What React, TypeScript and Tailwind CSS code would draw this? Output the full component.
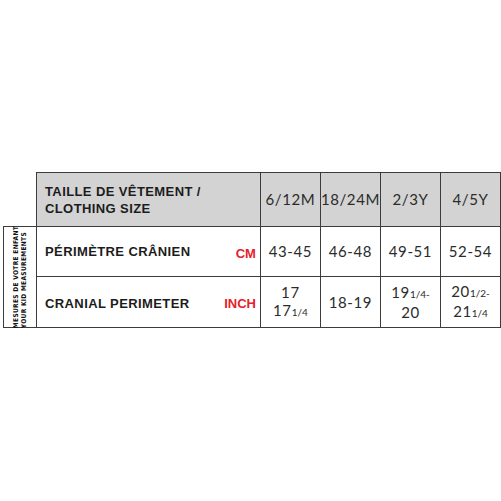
const sizes = ["6/12M", "18/24M", "2/3Y", "4/5Y"];
const cm = ["43-45", "46-48", "49-51", "52-54"];

const bold = "font-['Liberation_Sans',Arial,sans-serif] font-bold text-[13px] tracking-[0.4px] text-[#1c1c1c]";
const light = "font-['Lato','Open_Sans',sans-serif] font-normal text-[15px] tracking-[0.6px] text-[#2b2b2b] text-center";
const red = "font-['Liberation_Sans',Arial,sans-serif] text-[13px] font-bold text-[#e4222b]";

function Frac({ n }: { n: string }) {
  return <span className="text-[10px] tracking-normal">{n}</span>;
}

export default function App() {
  return (
    <div className="h-[501px] w-[501px] bg-white pl-[3px] pt-[172px]">
      <table className="table-fixed border-collapse">
        <colgroup>
          <col className="w-[33px]" />
          <col className="w-[224px]" />
          <col className="w-[60px]" />
          <col className="w-[59px]" />
          <col className="w-[60px]" />
          <col className="w-[60px]" />
        </colgroup>
        <tbody>
          <tr className="h-[54px]">
            <td />
            <td className="border border-[#3c3c3c] bg-[#d3d3d3] px-2 text-left align-middle">
              <div className={`${bold} leading-[17px]`}>
                TAILLE DE VÊTEMENT /<br />
                CLOTHING SIZE
              </div>
            </td>
            {sizes.map((s) => (
              <td key={s} className={`border border-[#3c3c3c] bg-[#d3d3d3] px-0 ${light}`}>
                {s}
              </td>
            ))}
          </tr>
          <tr className="h-[50px]">
            <td rowSpan={2} className="border border-[#3c3c3c] p-0 align-middle">
              <div className="flex h-[99px] items-center justify-center">
                <div className="rotate-180 whitespace-nowrap font-['DejaVu_Sans',sans-serif] text-[6.6px] font-bold font-stretch-condensed leading-[8px] tracking-[0.3px] text-[#111] [writing-mode:vertical-rl]">
                  MESURES DE VOTRE ENFANT
                  <br />
                  YOUR KID MEASUREMENTS
                </div>
              </div>
            </td>
            <td className="border border-[#3c3c3c] pl-2 pr-[4px]">
              <div className="flex items-center justify-between">
                <span className={bold}>PÉRIMÈTRE CRÂNIEN</span>
                <span className={`pt-[4px] ${red}`}>CM</span>
              </div>
            </td>
            {cm.map((v) => (
              <td key={v} className={`border border-[#3c3c3c] ${light}`}>
                {v}
              </td>
            ))}
          </tr>
          <tr className="h-[51px]">
            <td className="border border-[#3c3c3c] pl-2 pr-[4px] pt-[3px]">
              <div className="flex items-center justify-between">
                <span className={bold}>CRANIAL PERIMETER</span>
                <span className={red}>INCH</span>
              </div>
            </td>
            <td className={`border border-[#3c3c3c] leading-[18px] ${light}`}>
              17
              <br />
              17<Frac n="1/4" />
            </td>
            <td className={`border border-[#3c3c3c] ${light}`}>18-19</td>
            <td className={`border border-[#3c3c3c] leading-[18px] ${light}`}>
              19<Frac n="1/4-" />
              <br />
              20
            </td>
            <td className={`border border-[#3c3c3c] leading-[18px] ${light}`}>
              20<Frac n="1/2-" />
              <br />
              21<Frac n="1/4" />
            </td>
          </tr>
        </tbody>
      </table>
    </div>
  );
}
